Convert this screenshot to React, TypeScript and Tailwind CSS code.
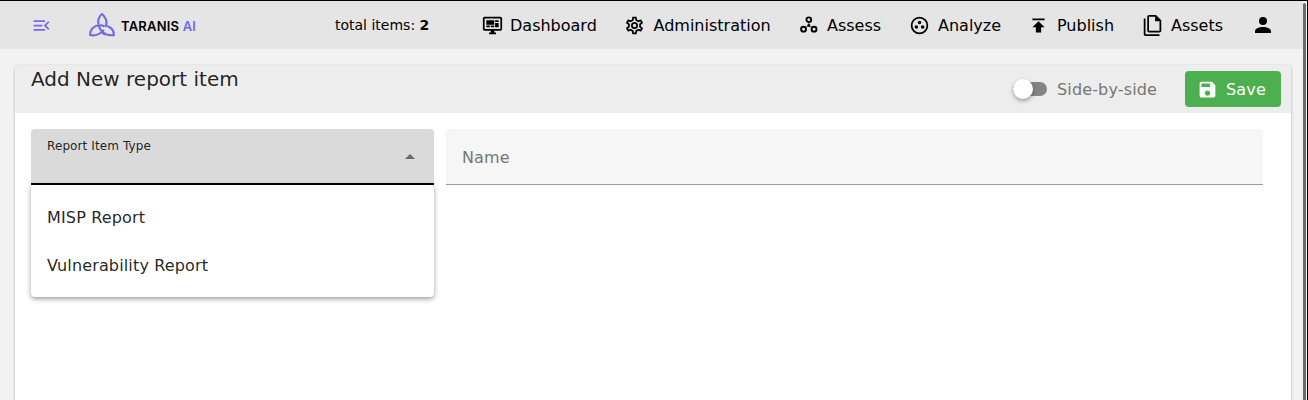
import type { ReactNode } from "react";

const paths = {
  menuOpen:
    "M21,15.61L19.59,17L14.58,12L19.59,7L21,8.39L17.44,12L21,15.61M3,6H16V8H3V6M3,13V11H13V13H3M3,18V16H16V18H3Z",
  dashboard:
    "M21,16V4H3V16H21M21,2A2,2 0 0,1 23,4V16A2,2 0 0,1 21,18H14V20H16V22H8V20H10V18H3C1.89,18 1,17.1 1,16V4C1,2.89 1.89,2 3,2H21M5,6H14V11H5V6M15,6H19V8H15V6M19,9V14H15V9H19M5,12H9V14H5V12M10,12H14V14H10V12Z",
  cog: "M12,8A4,4 0 0,1 16,12A4,4 0 0,1 12,16A4,4 0 0,1 8,12A4,4 0 0,1 12,8M12,10A2,2 0 0,0 10,12A2,2 0 0,0 12,14A2,2 0 0,0 14,12A2,2 0 0,0 12,10M10,22C9.75,22 9.54,21.82 9.5,21.58L9.13,18.93C8.5,18.68 7.96,18.34 7.44,17.94L4.95,18.95C4.73,19.03 4.46,18.95 4.34,18.73L2.34,15.27C2.21,15.05 2.27,14.78 2.46,14.63L4.57,12.97L4.5,12L4.57,11L2.46,9.37C2.27,9.22 2.21,8.95 2.34,8.73L4.34,5.27C4.46,5.05 4.73,4.96 4.95,5.05L7.44,6.05C7.96,5.66 8.5,5.32 9.13,5.07L9.5,2.42C9.54,2.18 9.75,2 10,2H14C14.25,2 14.46,2.18 14.5,2.42L14.87,5.07C15.5,5.32 16.04,5.66 16.56,6.05L19.05,5.05C19.27,4.96 19.54,5.05 19.66,5.27L21.66,8.73C21.79,8.95 21.73,9.22 21.54,9.37L19.43,11L19.5,12L19.43,13L21.54,14.63C21.73,14.78 21.79,15.05 21.66,15.27L19.66,18.73C19.54,18.95 19.27,19.04 19.05,18.95L16.56,17.95C16.04,18.34 15.5,18.68 14.87,18.93L14.5,21.58C14.46,21.82 14.25,22 14,22H10M11.25,4L10.88,6.61C9.68,6.86 8.62,7.5 7.85,8.39L5.44,7.35L4.69,8.65L6.8,10.2C6.4,11.37 6.4,12.64 6.8,13.8L4.68,15.36L5.43,16.66L7.86,15.62C8.63,16.5 9.68,17.14 10.87,17.38L11.24,20H12.76L13.13,17.39C14.32,17.14 15.37,16.5 16.14,15.62L18.57,16.66L19.32,15.36L17.2,13.81C17.6,12.64 17.6,11.37 17.2,10.2L19.31,8.65L18.56,7.35L16.15,8.39C15.38,7.5 14.32,6.86 13.12,6.62L12.75,4H11.25Z",
  publish: "M5,4V6H19V4H5M5,14H9V20H15V14H19L12,7L5,14Z",
  files:
    "M16,0H8C6.9,0 6,.9 6,2V18C6,19.1 6.9,20 8,20H20C21.1,20 22,19.1 22,18V6L16,0M20,18H8V2H15V7H20V18M4,4V22H20V24H4C2.9,24 2,23.1 2,22V4H4Z",
  account:
    "M12,4A4,4 0 0,1 16,8A4,4 0 0,1 12,12A4,4 0 0,1 8,8A4,4 0 0,1 12,4M12,14C16.42,14 20,15.79 20,18V20H4V18C4,15.79 7.58,14 12,14Z",
  save: "M15,9H5V5H15M12,19A3,3 0 0,1 9,16A3,3 0 0,1 12,13A3,3 0 0,1 15,16A3,3 0 0,1 12,19M17,3H5C3.89,3 3,3.9 3,5V19A2,2 0 0,0 5,21H19A2,2 0 0,0 21,19V7L17,3Z",
  menuUp: "M7,15L12,10L17,15H7Z",
};

function Icon({ d, className = "size-[21px]" }: { d: string; className?: string }) {
  return (
    <svg viewBox="0 0 24 24" fill="currentColor" className={`shrink-0 ${className}`}>
      <path d={d} />
    </svg>
  );
}

function AssessIcon() {
  return (
    <svg viewBox="0 0 24 24" fill="none" stroke="currentColor" strokeWidth="2.2" className="size-[21px] shrink-0">
      <circle cx="11.2" cy="5.4" r="2.7" />
      <circle cx="5.2" cy="16.2" r="2.8" />
      <circle cx="17.2" cy="16.2" r="2.8" />
      <circle cx="11.2" cy="12" r="1.7" fill="currentColor" stroke="none" />
      <path d="M11.2 8v3M11.2 12l-3 2M11.2 12l3 2" strokeWidth="0.8" />
    </svg>
  );
}

function AnalyzeIcon() {
  return (
    <svg viewBox="0 0 24 24" fill="currentColor" className="size-[21px] shrink-0">
      <circle cx="12" cy="12" r="9" fill="none" stroke="currentColor" strokeWidth="2" />
      <circle cx="12" cy="8.6" r="2" />
      <circle cx="8.4" cy="13.8" r="2" />
      <circle cx="15.6" cy="13.8" r="2" />
    </svg>
  );
}

function Logo() {
  return (
    <div className="flex h-full w-[110px] items-center">
      <svg viewBox="0 0 28 26" fill="none" stroke="#7468e8" strokeWidth="2.1" className="h-[26px] w-7 shrink-0">
        <path d="M10.300 12.500C9.800 8.500 10.800 4.500 14 2c4.200 3.500 5.400 8.500 3.600 13.200" />
        <path d="M16 17.800C13 21.700 7.500 24.300 2.200 23c-.6-5.700 4.800-10.600 11-9.700 1.200.2 2.300.6 3.300 1.200" />
        <path d="M10.800 13.800c.9 4.200 5.700 10.500 15 9.300.2-3.900-2.100-7.300-6.400-9" />
        <path d="M13.500 19.800c1.200 1.400 2.500 2.400 4 3" />
      </svg>
      <span className="ml-[5px] mt-[3px] whitespace-nowrap font-['Inter',sans-serif] text-[13px] font-semibold tracking-[0.200px] text-black">
        TARANIS <span className="text-[#7468e8]">AI</span>
      </span>
    </div>
  );
}

function NavItem({ icon, label, className }: { icon: ReactNode; label: string; className: string }) {
  return (
    <a className={`flex shrink-0 items-center whitespace-nowrap ${className}`}>
      {icon}
      <span className="pt-[2px]">{label}</span>
    </a>
  );
}

export default function App() {
  return (
    <div className="flex h-[400px] w-[1308px] overflow-hidden border-t border-black bg-[#f2f2f2] font-['DejaVu_Sans',sans-serif] text-base text-black/87">
      <div className="flex w-[1303px] shrink-0 flex-col">
        <header className="flex h-12 shrink-0 items-center bg-[#e5e5e5] text-black">
          <div className="w-[57px] shrink-0 pl-[31px] text-[#7468e8]">
            <Icon d={paths.menuOpen} />
          </div>
          <div className="flex w-[278px] shrink-0 pl-[31px]">
            <Logo />
          </div>
          <div className="w-[146px] shrink-0 whitespace-nowrap text-sm">
            total items: <strong>2</strong>
          </div>
          <NavItem className="w-[143px] gap-[7px] pl-px" icon={<Icon d={paths.dashboard} />} label="Dashboard" />
          <NavItem className="w-[174px] gap-[8.500px]" icon={<Icon d={paths.cog} />} label="Administration" />
          <NavItem className="w-[111px] gap-[7px] pl-px" icon={<AssessIcon />} label="Assess" />
          <NavItem className="w-[119px] gap-2" icon={<AnalyzeIcon />} label="Analyze" />
          <NavItem className="w-[113px] gap-2" icon={<Icon d={paths.publish} />} label="Publish" />
          <NavItem className="w-[110px] gap-2 pl-px" icon={<Icon d={paths.files} />} label="Assets" />
          <Icon d={paths.account} className="size-6" />
        </header>
        <main className="mt-4 ml-[15px] flex w-[1276px] flex-1 flex-col rounded-t bg-white shadow-[0_1px_3px_rgba(0,0,0,0.3)]">
          <div className="flex h-12 shrink-0 rounded-t bg-[#ededed] pl-4 pr-[10px]">
            <h1 className="flex-1 text-xl leading-7">Add New report item</h1>
            <div className="flex items-center text-[#767676]">
              <div className="flex h-[14px] w-[34px] items-center rounded-full bg-[#848484]">
                <span className="size-5 rounded-full bg-white shadow-[0_2px_4px_rgba(0,0,0,0.35)]" />
              </div>
              <span className="ml-[10px] w-32 whitespace-nowrap pt-[2px] tracking-[0.15px]">Side-by-side</span>
              <button className="flex h-9 w-24 items-center rounded bg-[#4caf50] pl-3 text-white">
                <Icon d={paths.save} />
                <span className="ml-2 pt-[2px] tracking-[0.15px]">Save</span>
              </button>
            </div>
          </div>
          <div className="flex gap-3 pl-4 pt-4">
            <div className="w-[403px]">
              <div className="flex h-14 justify-between rounded-t border-b-2 border-black bg-[#dadada] pl-4 pr-3">
                <span className="pt-2 text-xs leading-[18px] tracking-[0.1px]">Report Item Type</span>
                <Icon d={paths.menuUp} className="mt-[15px] size-6 text-[#696969]" />
              </div>
              <div className="flex h-28 flex-col rounded-b bg-white py-2 shadow-[0_2px_5px_rgba(0,0,0,0.38)]">
                <div className="flex h-12 items-center px-4 pt-[2px] tracking-[0.15px]">MISP Report</div>
                <div className="flex h-12 items-center px-4 pt-[2px] tracking-[0.15px]">Vulnerability Report</div>
              </div>
            </div>
            <div className="flex h-14 w-[817px] items-center rounded-t border-b border-[#9c9c9c] bg-[#f6f6f6] pl-4 pt-[2px] tracking-[0.15px] text-[#767676]">
              Name
            </div>
          </div>
        </main>
      </div>
      <div className="mt-[2px] w-[3px] shrink-0 rounded-t bg-[#6b6b6b]" />
      <div className="w-px shrink-0 bg-[#f5f5f5]" />
      <div className="w-px shrink-0 bg-black" />
    </div>
  );
}
